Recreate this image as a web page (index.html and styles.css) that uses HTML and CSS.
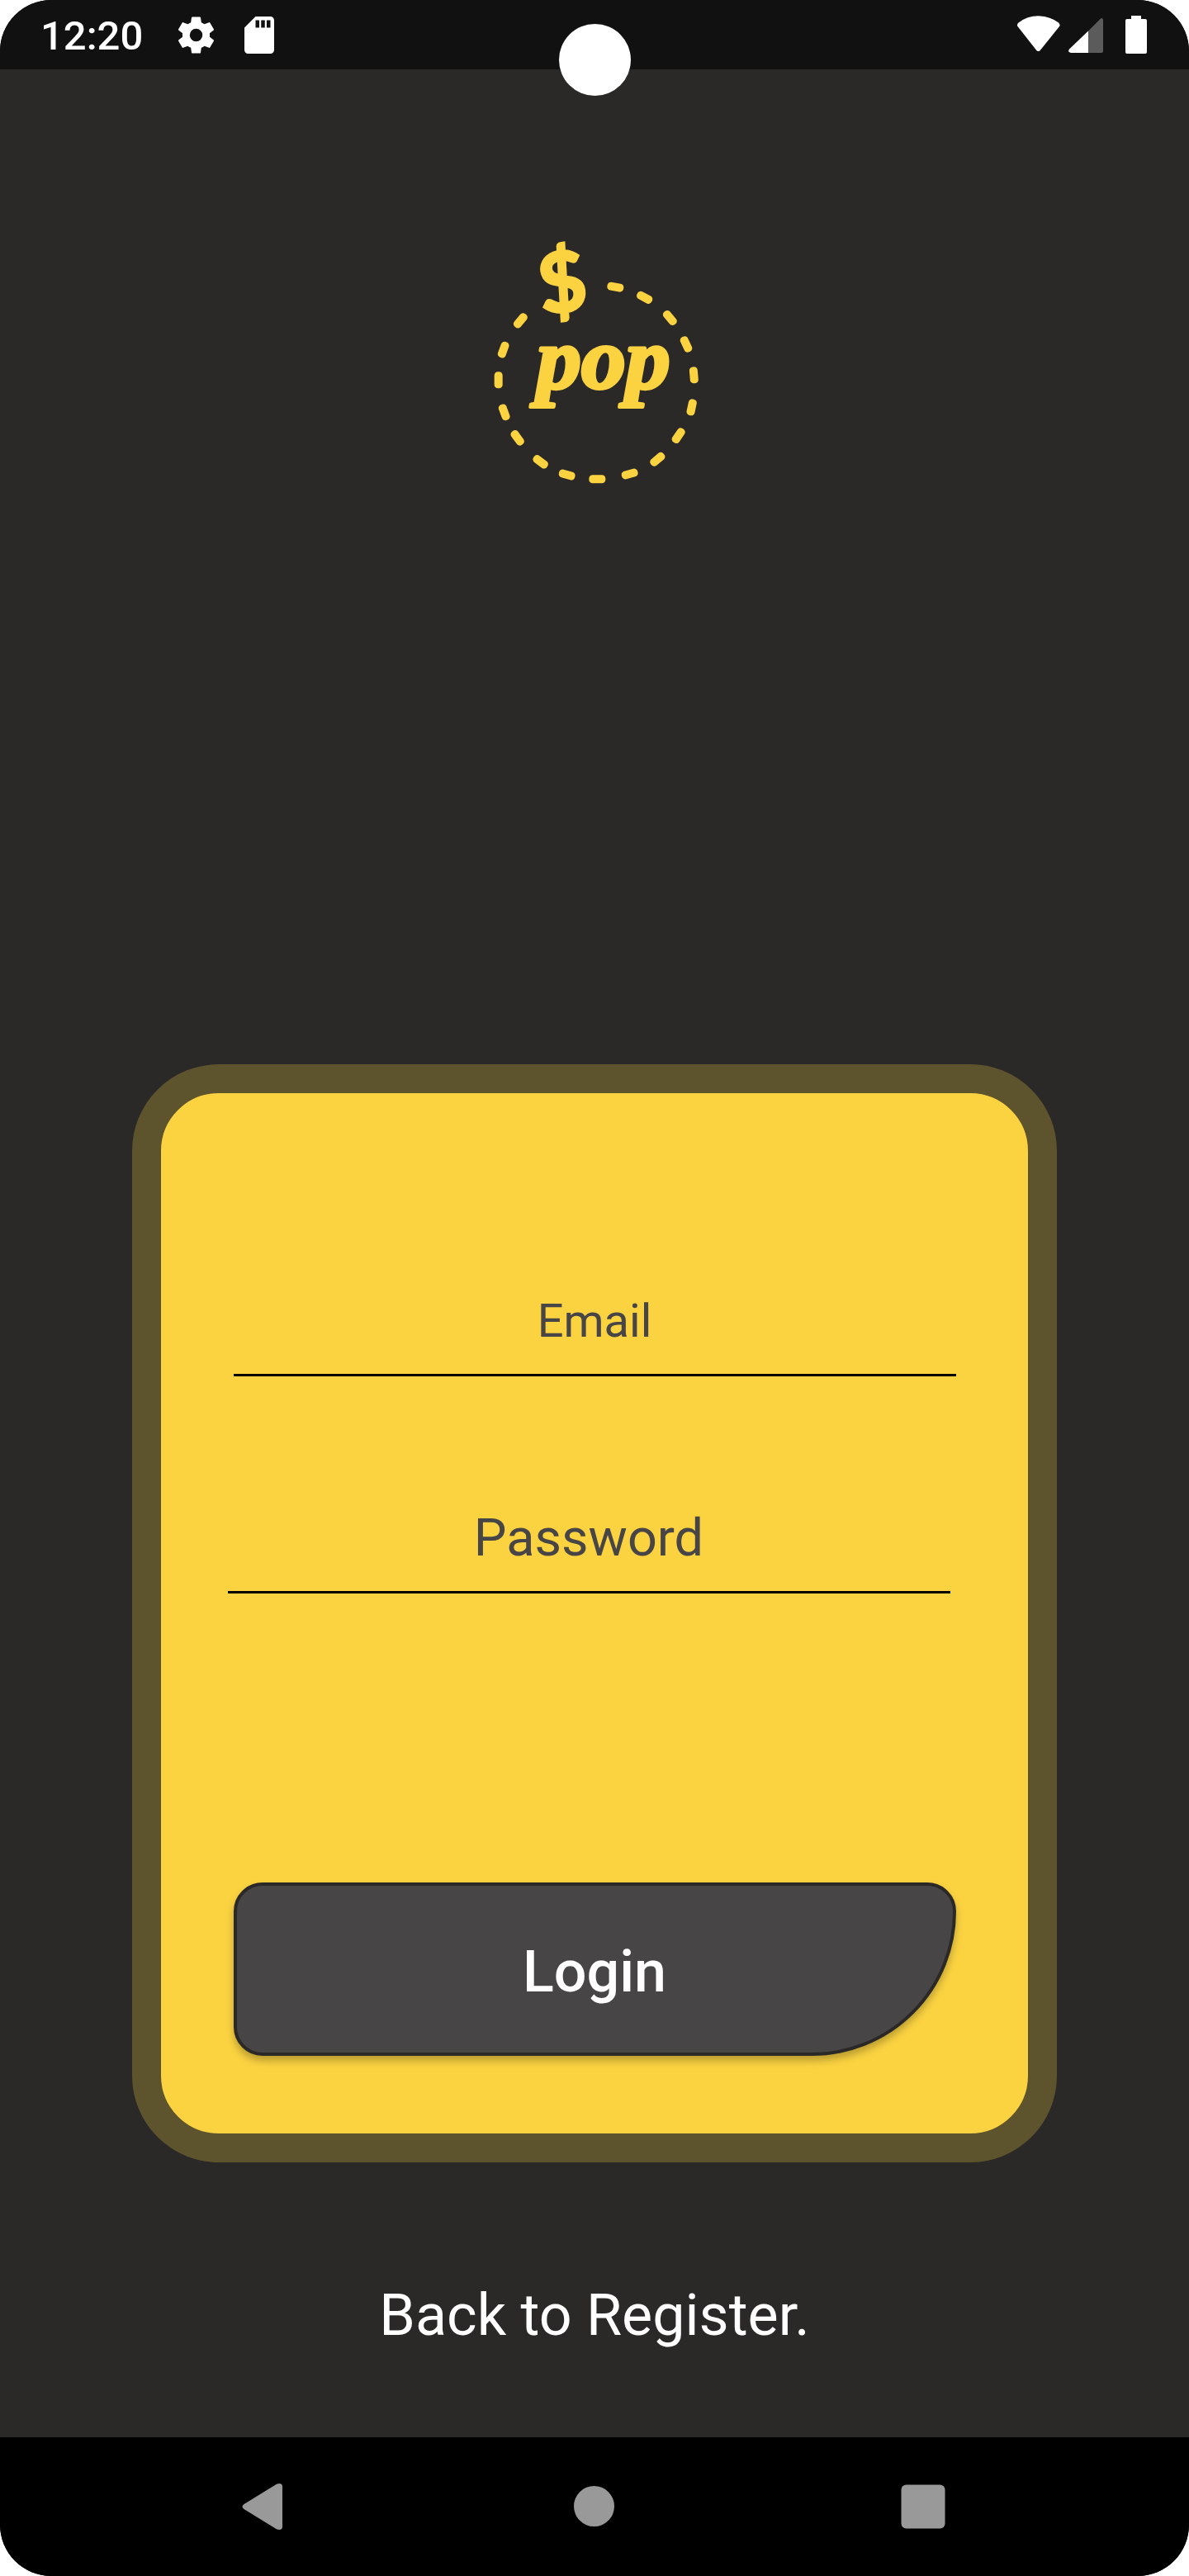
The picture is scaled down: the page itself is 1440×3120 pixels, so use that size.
FILE: index.html
```html
<!DOCTYPE html>
<html lang="en">
<head>
<meta charset="utf-8">
<title>Login</title>
<link rel="stylesheet" href="styles.css">
</head>
<body>
<div class="phone">
  <header class="status">
    <span class="clock">12:20</span>
    <svg class="gear" viewBox="0 0 24 24"><path d="M19.43 12.98c.04-.32.07-.64.07-.98s-.03-.66-.07-.98l2.11-1.65c.19-.15.24-.42.12-.64l-2-3.46c-.12-.22-.39-.3-.61-.22l-2.49 1c-.52-.4-1.08-.73-1.69-.98l-.38-2.65C14.46 2.18 14.25 2 14 2h-4c-.25 0-.46.18-.49.42l-.38 2.65c-.61.25-1.17.59-1.69.98l-2.49-1c-.23-.09-.49 0-.61.22l-2 3.46c-.13.22-.07.49.12.64l2.11 1.65c-.04.32-.07.65-.07.98s.03.66.07.98l-2.11 1.65c-.19.15-.24.42-.12.64l2 3.46c.12.22.39.3.61.22l2.49-1c.52.4 1.08.73 1.69.98l.38 2.65c.03.24.24.42.49.42h4c.25 0 .46-.18.49-.42l.38-2.65c.61-.25 1.17-.59 1.69-.98l2.49 1c.23.09.49 0 .61-.22l2-3.46c.12-.22.07-.49-.12-.64l-2.11-1.65zM12 15.5a3.5 3.5 0 1 1 0-7 3.5 3.5 0 0 1 0 7z"/></svg>
    <svg class="sd" viewBox="4 2 16 20"><path d="M18 2h-8L4.020 8 4 20c0 1.100.9 2 2 2h12c1.100 0 2-.9 2-2V4c0-1.100-.9-2-2-2zm-6 6h-2V4h2v4zm3 0h-2V4h2v4zm3 0h-2V4h2v4z"/></svg>
    <svg class="signals" viewBox="0 0 160 48">
      <path d="M1.500 14Q0 12 2.500 9.500Q13 1.300 26.500 1.300T51 9.500Q53.500 12 52 14L28.500 43.200Q26.500 45 24.500 43.200z"/>
      <path d="M87 19.500V46H66Q61.500 45 64 41.500z"/>
      <path class="dim" d="M87 19.500L101.500 5Q104 2.500 105 6V44Q105 46 103 46H87z"/>
      <path d="M139 1h12v4h5q2 0 2 2V45q0 2-2 2h-22q-2 0-2-2V7q0-2 2-2h5z"/>
    </svg>
    <span class="camera"></span>
  </header>
  <main class="screen">
    <svg class="logo" viewBox="0 0 870 990" role="img" aria-label="$pop">
      <defs><rect id="dash" x="-30" y="-15" width="60" height="30" rx="13"/></defs>
      <use href="#dash" transform="translate(496 233) rotate(10)"/>
      <use href="#dash" transform="translate(602 271) rotate(28)"/>
      <use href="#dash" transform="translate(694 345) rotate(50)"/>
      <use href="#dash" transform="translate(753 441) rotate(65)"/>
      <use href="#dash" transform="translate(781 553) rotate(85)"/>
      <use href="#dash" transform="translate(773 670) rotate(102)"/>
      <use href="#dash" transform="translate(725 773) rotate(124)"/>
      <use href="#dash" transform="translate(649 859) rotate(140)"/>
      <use href="#dash" transform="translate(548 912) rotate(165)"/>
      <use href="#dash" transform="translate(430 931)"/>
      <use href="#dash" transform="translate(320 915) rotate(16)"/>
      <use href="#dash" transform="translate(224 868) rotate(37)"/>
      <use href="#dash" transform="translate(140 781) rotate(54)"/>
      <use href="#dash" transform="translate(92 688) rotate(70)"/>
      <use href="#dash" transform="translate(71 571) rotate(90)"/>
      <use href="#dash" transform="translate(89 461) rotate(110)"/>
      <use href="#dash" transform="translate(151 355) rotate(130)"/>
      <text class="dollar" transform="translate(302 214) rotate(-8)" x="0" y="108">$</text>
      <text class="pop" x="210" y="599" textLength="485" lengthAdjust="spacingAndGlyphs">pop</text>
    </svg>
    <section class="card">
      <div class="field email">Email</div>
      <div class="field password">Password</div>
      <button class="login">Login</button>
    </section>
    <a class="register">Back to Register.</a>
  </main>
  <nav class="nav">
    <svg viewBox="0 0 60 60"><path d="M5.500 27L44.500 3Q51 .5 52 5V55Q51 59.500 44.500 57L5.500 33Q1.500 30 5.500 27z"/></svg>
    <svg viewBox="0 0 60 60"><circle cx="30.500" cy="29.500" r="24.500"/></svg>
    <svg viewBox="0 0 60 60"><rect x="3.500" y="3.500" width="53" height="53" rx="6"/></svg>
  </nav>
</div>
</body>
</html>
```
FILE: styles.css
```css
* { box-sizing: border-box; }
body { margin: 0; background: #fff; font-family: Roboto, sans-serif; }
.phone {
  width: 1440px; height: 3120px;
  display: flex; flex-direction: column;
  border-radius: 62px; overflow: hidden;
  background: #2a2928;
}
.status {
  position: relative;
  height: 84px; flex: none;
  display: flex; align-items: flex-start;
  padding-left: 49px; padding-right: 49px;
  background: #111; fill: #fff;
}
.clock { width: 162px; color: #fff; font-size: 49px; font-weight: 500; line-height: 88px; }
.gear { width: 53px; height: 53px; margin-top: 16px; }
.sd { width: 36px; height: 45px; margin: 20px 0 0 32px; }
.signals { width: 160px; height: 48px; margin: 18px 0 0 auto; }
.dim { fill: #5b5b5b; }
.camera {
  position: absolute; left: 677px; top: 29px;
  width: 87px; height: 87px; border-radius: 50%; background: #fff;
}
.screen { flex: 1; display: flex; flex-direction: column; align-items: center; }
.logo { width: 290px; height: 330px; margin: 186px 0 0 10px; fill: #fbd341; }
.dollar {
  font: 700 300px Lato, sans-serif; text-anchor: middle;
  stroke: #fbd341; stroke-width: 10;
}
.pop {
  font: italic 700 315px "Liberation Serif", serif;
  stroke: #fbd341; stroke-width: 12; stroke-linejoin: round;
}
.card {
  width: 1120px; height: 1330px; margin-top: 689px;
  display: flex; flex-direction: column; align-items: center;
  padding-top: 212px;
  border: 35px solid #5d532c; border-radius: 105px;
  background: #fbd341;
}
.field {
  width: 875px; border-bottom: 3px solid #000;
  color: #484546; text-align: center;
}
.email { font-size: 56px; line-height: 128px; }
.password { margin: 131px 14px 0 0; font-size: 63px; line-height: 129px; }
.login {
  width: 875px; height: 210px; margin-top: 350px; padding: 6px 0 0;
  border: 4px solid #2a2928; border-radius: 35px 35px 175px 35px;
  background: #484546; color: #fff;
  font: 500 70px Roboto, sans-serif;
  box-shadow: 0 6px 10px rgba(0, 0, 0, .26);
}
.register { margin-top: 143px; color: #fff; font-size: 70px; line-height: 84px; }
.nav {
  height: 168px; flex: none;
  display: flex; justify-content: space-between;
  padding: 54px 292px 0 290px;
  background: #000; fill: #999;
}
.nav svg { width: 60px; height: 60px; }
```
